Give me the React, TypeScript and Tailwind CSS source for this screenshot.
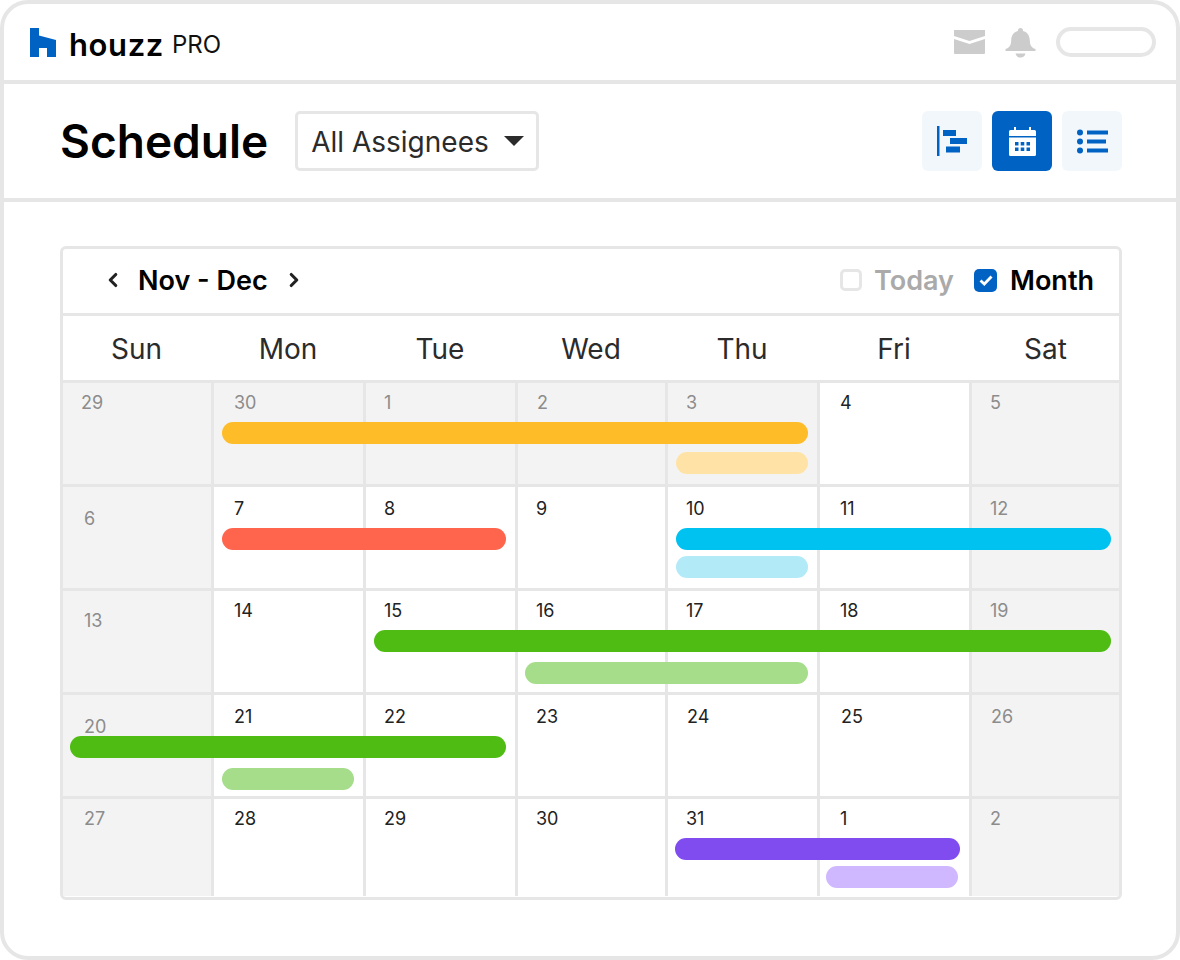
import { ChevronLeft, ChevronRight } from 'lucide-react';

const font = { fontFamily: 'Inter, Lato, sans-serif' };

type Cell = { day: number; off?: boolean; pos: string };
type Bar = { color: string; pos: string };

const weekdays = ['Sun', 'Mon', 'Tue', 'Wed', 'Thu', 'Fri', 'Sat'];

const weeks: { cells: Cell[]; bars: Bar[] }[] = [
  {
    cells: [
      { day: 29, off: true, pos: 'pl-[18px] pt-[8px]' },
      { day: 30, off: true, pos: 'pl-[20px] pt-[8px]' },
      { day: 1, off: true, pos: 'pl-[18px] pt-[8px]' },
      { day: 2, off: true, pos: 'pl-[19px] pt-[8px]' },
      { day: 3, off: true, pos: 'pl-[18px] pt-[8px]' },
      { day: 4, pos: 'pl-[20px] pt-[8px]' },
      { day: 5, off: true, pos: 'pl-[18px] pt-[8px]' },
    ],
    bars: [
      { color: 'bg-[#ffbc29]', pos: 'left-[159px] w-[586px] top-[39px]' },
      { color: 'bg-[#ffe3a6]', pos: 'left-[613px] w-[132px] top-[69px]' },
    ],
  },
  {
    cells: [
      { day: 6, off: true, pos: 'pl-[21px] pt-[20px]' },
      { day: 7, pos: 'pl-[20px] pt-[10px]' },
      { day: 8, pos: 'pl-[18px] pt-[10px]' },
      { day: 9, pos: 'pl-[18px] pt-[10px]' },
      { day: 10, pos: 'pl-[18px] pt-[10px]' },
      { day: 11, pos: 'pl-[20px] pt-[10px]' },
      { day: 12, off: true, pos: 'pl-[18px] pt-[10px]' },
    ],
    bars: [
      { color: 'bg-[#ff654d]', pos: 'left-[159px] w-[284px] top-[41px]' },
      { color: 'bg-[#00c2f0]', pos: 'left-[613px] w-[435px] top-[41px]' },
      { color: 'bg-[#b3eaf7]', pos: 'left-[613px] w-[132px] top-[69px]' },
    ],
  },
  {
    cells: [
      { day: 13, off: true, pos: 'pl-[21px] pt-[18px]' },
      { day: 14, pos: 'pl-[20px] pt-[8px]' },
      { day: 15, pos: 'pl-[18px] pt-[8px]' },
      { day: 16, pos: 'pl-[18px] pt-[8px]' },
      { day: 17, pos: 'pl-[18px] pt-[8px]' },
      { day: 18, pos: 'pl-[20px] pt-[8px]' },
      { day: 19, off: true, pos: 'pl-[18px] pt-[8px]' },
    ],
    bars: [
      { color: 'bg-[#4fbc14]', pos: 'left-[311px] w-[737px] top-[39px]' },
      { color: 'bg-[#a6dd8a]', pos: 'left-[462px] w-[283px] top-[71px]' },
    ],
  },
  {
    cells: [
      { day: 20, off: true, pos: 'pl-[21px] pt-[20px]' },
      { day: 21, pos: 'pl-[20px] pt-[10px]' },
      { day: 22, pos: 'pl-[18px] pt-[10px]' },
      { day: 23, pos: 'pl-[18px] pt-[10px]' },
      { day: 24, pos: 'pl-[19px] pt-[10px]' },
      { day: 25, pos: 'pl-[21px] pt-[10px]' },
      { day: 26, off: true, pos: 'pl-[19px] pt-[10px]' },
    ],
    bars: [
      { color: 'bg-[#4fbc14]', pos: 'left-[7px] w-[436px] top-[41px]' },
      { color: 'bg-[#a6dd8a]', pos: 'left-[159px] w-[132px] top-[73px]' },
    ],
  },
  {
    cells: [
      { day: 27, off: true, pos: 'pl-[21px] pt-[8px]' },
      { day: 28, pos: 'pl-[20px] pt-[8px]' },
      { day: 29, pos: 'pl-[18px] pt-[8px]' },
      { day: 30, pos: 'pl-[18px] pt-[8px]' },
      { day: 31, pos: 'pl-[18px] pt-[8px]' },
      { day: 1, pos: 'pl-[20px] pt-[8px]' },
      { day: 2, off: true, pos: 'pl-[18px] pt-[8px]' },
    ],
    bars: [
      { color: 'bg-[#804cef]', pos: 'left-[612px] w-[285px] top-[39px]' },
      { color: 'bg-[#cfb8ff]', pos: 'left-[763px] w-[132px] top-[67px]' },
    ],
  },
];

function HouzzMark() {
  return (
    <svg width="26" height="29" viewBox="0 0 26 29" fill="#0063c3">
      <path d="M0 0h9v7.500L26 12v17h-9v-9H9v9H0z" />
    </svg>
  );
}

function Mail() {
  return (
    <svg width="31" height="24" viewBox="0 0 31 24" fill="#cccccc">
      <path d="M0 0h31v6L15.500 11 0 6z" />
      <path d="M0 9l15.500 5L31 9v14a1 1 0 0 1-1 1H1a1 1 0 0 1-1-1z" />
    </svg>
  );
}

function Bell() {
  return (
    <svg width="31" height="31" viewBox="0 0 31 31" fill="#cccccc">
      <path d="M13 3.500a2.500 2.500 0 0 1 5 0v.6c4.400 1 6.600 4.400 6.800 9.300.2 4.500 1.200 6.800 5.700 8.600v2H.5v-2c4.500-1.800 5.500-4.100 5.700-8.600C6.400 8.500 8.600 5.100 13 4.100z" />
      <path d="M10.500 26.500h10c-.5 2.500-2.500 4-5 4s-4.500-1.500-5-4z" />
    </svg>
  );
}

function Gantt() {
  return (
    <svg width="30" height="30" viewBox="0 0 30 30" fill="#0063c3">
      <rect x="0" y="0" width="2.500" height="30" />
      <rect x="6" y="4" width="13" height="6" />
      <rect x="13" y="12" width="17" height="6" />
      <rect x="9" y="20.500" width="14" height="6" />
    </svg>
  );
}

function CalendarIcon() {
  return (
    <svg width="27" height="29" viewBox="0 0 27 29" fill="#ffffff">
      <path d="M5 0h2v3h13V0h2v3h3.500A1.500 1.500 0 0 1 27 4.500V9H0V4.500A1.500 1.500 0 0 1 1.500 3H5z" />
      <path
        fillRule="evenodd"
        d="M0 10.500h27v17a1.500 1.500 0 0 1-1.500 1.500h-24A1.500 1.500 0 0 1 0 27.500zM6 15v3.500h3.500V15zm5.700 0v3.500h3.600V15zm5.800 0v3.500H21V15zM6 20.500V24h3.500v-3.500zm5.700 0V24h3.600v-3.500zm5.800 0V24H21v-3.500z"
      />
    </svg>
  );
}

function ListIcon() {
  return (
    <svg width="31" height="25" viewBox="0 0 31 25" fill="#0063c3">
      <circle cx="3" cy="3.500" r="3" />
      <circle cx="3" cy="12.500" r="3" />
      <circle cx="3" cy="21.500" r="3" />
      <rect x="10" y="1.500" width="21" height="4" />
      <rect x="10" y="10.500" width="19" height="4" />
      <rect x="10" y="19.500" width="21" height="4" />
    </svg>
  );
}

function ViewButton({ active, children }: { active?: boolean; children: React.ReactNode }) {
  return (
    <div
      className={`w-[60px] h-[60px] rounded-md flex items-center justify-center ${active ? 'bg-[#0063c3]' : 'bg-[#f2f7fc]'}`}
    >
      {children}
    </div>
  );
}

export default function App() {
  return (
    <div style={font} className="w-[1180px] h-[960px] bg-white overflow-hidden">
      <div className="h-full border-4 border-[#e6e6e6] rounded-[28px] flex flex-col">
        {/* top bar */}
        <div className="h-[80px] shrink-0 border-b-4 border-[#e6e6e6] flex items-center pl-[26px] pr-[20px]">
          <HouzzMark />
          <span className="ml-[13px] mt-[4px] text-[31px] font-semibold text-black tracking-[0.6px] leading-none">houzz</span>
          <span className="ml-[8px] mt-[5px] text-[24px] text-[#111] leading-none">PRO</span>
          <div className="ml-auto flex items-center">
            <Mail />
            <div className="ml-[20px]">
              <Bell />
            </div>
            <div className="ml-[20px] w-[100px] h-[30px] rounded-full border-4 border-[#e6e6e6]" />
          </div>
        </div>

        {/* title row */}
        <div className="h-[118px] shrink-0 border-b-4 border-[#e6e6e6] flex items-center pl-[56px] pr-[54px]">
          <h1 className="text-[46px] font-semibold text-black leading-none">Schedule</h1>
          <div className="ml-[27px] w-[244px] h-[60px] border-[3px] border-[#e6e6e6] rounded-[5px] flex items-center pl-[13px]">
            <span className="mt-px text-[28px] text-[#2b2b2b] leading-none">All Assignees</span>
            <svg className="ml-auto mr-[12px]" width="20" height="10" viewBox="0 0 20 10" fill="#2b2b2b">
              <path d="M0 0h20L10 10z" />
            </svg>
          </div>
          <div className="ml-auto flex gap-[10px]">
            <ViewButton>
              <Gantt />
            </ViewButton>
            <ViewButton active>
              <CalendarIcon />
            </ViewButton>
            <ViewButton>
              <ListIcon />
            </ViewButton>
          </div>
        </div>

        {/* calendar */}
        <div className="mt-[44px] ml-[56px] mr-[54px] h-[654px] border-[3px] border-[#e6e6e6] rounded-md flex flex-col">
          <div className="h-[67px] shrink-0 border-b-[3px] border-[#e6e6e6] flex items-center pl-[39px] pr-[25px] pb-[2px]">
            <ChevronLeft size={22} strokeWidth={3.4} className="text-[#222]" />
            <span className="ml-[14px] text-[27px] font-semibold text-black leading-none">Nov - Dec</span>
            <ChevronRight size={22} strokeWidth={3.4} className="ml-[15px] text-[#222]" />
            <div className="ml-auto w-[22px] h-[22px] border-[3px] border-[#e6e6e6] rounded-[5px]" />
            <span className="ml-[12px] text-[27px] font-semibold text-[#aaaaaa] leading-none">Today</span>
            <div className="ml-[20px] w-[23px] h-[23px] rounded-[5px] bg-[#0063c3] flex items-center justify-center">
              <svg width="14" height="11" viewBox="0 0 14 11" fill="none" stroke="#fff" strokeWidth="2.800">
                <path d="M1.500 5.500l3.800 3.500L12.500 1.500" />
              </svg>
            </div>
            <span className="ml-[13px] text-[27px] font-semibold text-black leading-none">Month</span>
          </div>

          <div className="grid grid-cols-[151px_152px_152px_150px_152px_152px_147px] h-[67px] shrink-0 border-b-[3px] border-[#e6e6e6]">
            {weekdays.map((name, j) => (
              <div
                key={name}
                className={`flex items-center justify-center pt-[2px] text-[28px] text-[#2b2b2b] leading-none ${j < 6 ? 'pr-[4px]' : ''}`}
              >
                {name}
              </div>
            ))}
          </div>

          {weeks.map((week, i) => (
            <div
              key={i}
              className={`relative grid grid-cols-[151px_152px_152px_150px_152px_152px_147px] ${
                i === 4 ? 'h-[97px]' : 'h-[104px] border-b-[3px] border-[#e6e6e6]'
              }`}
            >
              {week.cells.map((cell, j) => (
                <div
                  key={j}
                  className={`${cell.pos} text-[18px] leading-[24px] ${
                    cell.off ? 'bg-[#f3f3f3] text-[#8c8c8c]' : 'bg-white text-[#222]'
                  } ${j < 6 ? 'border-r-[3px] border-[#e6e6e6]' : ''}`}
                >
                  {cell.day}
                </div>
              ))}
              {week.bars.map((bar, k) => (
                <div key={k} className={`absolute h-[22px] rounded-full ${bar.color} ${bar.pos}`} />
              ))}
            </div>
          ))}
        </div>
      </div>
    </div>
  );
}
